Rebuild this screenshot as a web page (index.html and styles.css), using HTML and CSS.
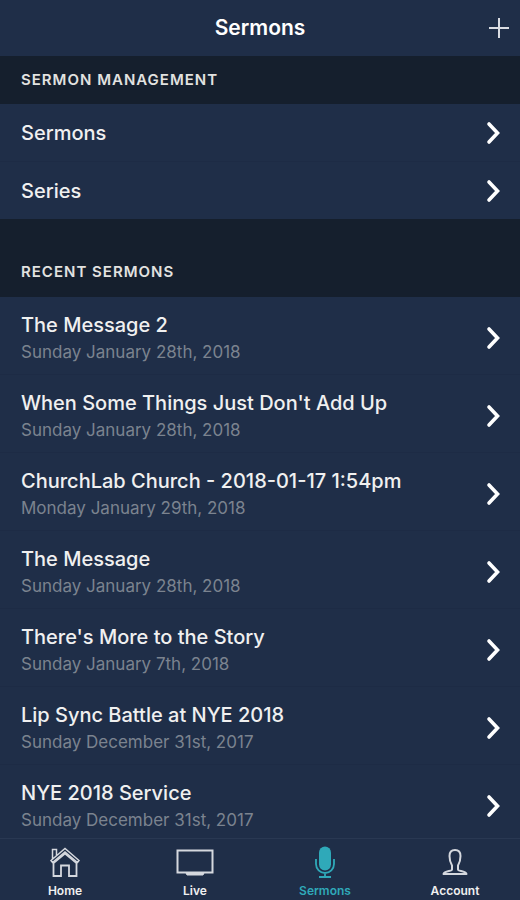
FILE: index.html
```html
<!DOCTYPE html>
<html lang="en">
<head>
<meta charset="utf-8">
<meta name="viewport" content="width=device-width, initial-scale=1">
<title>Sermons</title>
<link rel="stylesheet" href="styles.css">
</head>
<body>
<svg class="symbols" aria-hidden="true">
  <symbol id="chevron" viewBox="0 0 16 24"><path d="M3 3l8.500 9L3 21" fill="none" stroke="currentColor" stroke-width="3.600" stroke-linecap="round" stroke-linejoin="miter"/></symbol>
</svg>
<header class="topbar">
  <h1 class="topbar-title">Sermons</h1>
  <button class="add" type="button" aria-label="Add sermon">
    <svg width="22" height="22" viewBox="0 0 22 22" aria-hidden="true"><path d="M11 1v20M1 11h20" stroke="currentColor" stroke-width="2" fill="none"/></svg>
  </button>
</header>
<main class="content">
  <h2 class="section">Sermon Management</h2>
  <ul class="list">
    <li><a class="row" href="#sermons"><span class="name">Sermons</span><svg class="chevron"><use href="#chevron"/></svg></a></li>
    <li><a class="row" href="#series"><span class="name">Series</span><svg class="chevron"><use href="#chevron"/></svg></a></li>
  </ul>
  <h2 class="section section-spaced">Recent Sermons</h2>
  <ul class="list">
    <li><a class="row row-tall" href="#s1"><span class="text"><span class="name">The Message 2</span><span class="date">Sunday January 28th, 2018</span></span><svg class="chevron"><use href="#chevron"/></svg></a></li>
    <li><a class="row row-tall" href="#s2"><span class="text"><span class="name">When Some Things Just Don't Add Up</span><span class="date">Sunday January 28th, 2018</span></span><svg class="chevron"><use href="#chevron"/></svg></a></li>
    <li><a class="row row-tall" href="#s3"><span class="text"><span class="name">ChurchLab Church - 2018-01-17 1:54pm</span><span class="date">Monday January 29th, 2018</span></span><svg class="chevron"><use href="#chevron"/></svg></a></li>
    <li><a class="row row-tall" href="#s4"><span class="text"><span class="name">The Message</span><span class="date">Sunday January 28th, 2018</span></span><svg class="chevron"><use href="#chevron"/></svg></a></li>
    <li><a class="row row-tall" href="#s5"><span class="text"><span class="name">There's More to the Story</span><span class="date">Sunday January 7th, 2018</span></span><svg class="chevron"><use href="#chevron"/></svg></a></li>
    <li><a class="row row-tall" href="#s6"><span class="text"><span class="name">Lip Sync Battle at NYE 2018</span><span class="date">Sunday December 31st, 2017</span></span><svg class="chevron"><use href="#chevron"/></svg></a></li>
    <li><a class="row row-tall" href="#s7"><span class="text"><span class="name">NYE 2018 Service</span><span class="date">Sunday December 31st, 2017</span></span><svg class="chevron"><use href="#chevron"/></svg></a></li>
  </ul>
</main>
<nav class="tabs">
  <a class="tab" href="#home">
    <svg width="40" height="34" viewBox="0 0 40 34" fill="none" stroke="currentColor" aria-hidden="true"><path d="M8.500 31V18L20 8.500 31.500 18v13H24V20.500h-8V31z" stroke-width="1.800"/><path d="M6 15.500L20 3.500l14 12-1.500 2L20 7 7.500 17.500zM7.500 14V4.500h4v6" stroke-width="1.500"/></svg>
    <span>Home</span>
  </a>
  <a class="tab" href="#live">
    <svg width="40" height="34" viewBox="0 0 40 34" fill="none" stroke="currentColor" aria-hidden="true"><rect x="2.500" y="5.500" width="35" height="22" stroke-width="2"/><path d="M11 28h18l-1 2H12z" fill="currentColor" stroke-width="1"/></svg>
    <span>Live</span>
  </a>
  <a class="tab tab-active" href="#sermons" aria-current="page">
    <svg width="40" height="34" viewBox="0 0 40 34" fill="none" stroke="currentColor" aria-hidden="true"><rect x="14" y="1.500" width="12" height="24" rx="6" fill="currentColor" stroke="none"/><path d="M11 14v5a9 9 0 0 0 18 0v-5M20 28v4M14 32h12" stroke-width="1.800"/></svg>
    <span>Sermons</span>
  </a>
  <a class="tab" href="#account">
    <svg width="40" height="34" viewBox="0 0 40 34" fill="none" stroke="currentColor" aria-hidden="true"><path d="M20 5c-4 0-5.500 2.500-5.500 6 0 4 1 7 2.500 9.500v4c0 2-7.500 1-8.500 4.500h23c-1-3.500-8.500-2.500-8.500-4.500v-4c1.500-2.500 2.500-5.500 2.500-9.500 0-3.500-1.500-6-5.500-6z" stroke-width="2" stroke-linejoin="round"/></svg>
    <span>Account</span>
  </a>
</nav>
</body>
</html>
```
FILE: styles.css
```css
* {
  box-sizing: border-box;
}

body {
  margin: 0;
  height: 100vh;
  display: flex;
  flex-direction: column;
  background: #1f2e48;
  color: #f0f0f0;
  font-family: Inter, "Liberation Sans", sans-serif;
}

a {
  color: inherit;
  text-decoration: none;
}

.symbols {
  display: none;
}

.topbar {
  flex: none;
  display: grid;
  grid-template-columns: 1fr auto 1fr;
  align-items: center;
  height: 56px;
  padding: 0 10px;
}

.topbar-title {
  grid-column: 2;
  margin: 0;
  font-size: 21px;
  font-weight: 600;
  line-height: 28px;
  color: #fff;
}

.add {
  justify-self: end;
  display: flex;
  padding: 0;
  border: 0;
  background: none;
  color: #d9dce2;
}

.content {
  flex: 1;
  min-height: 0;
  overflow-y: auto;
  scrollbar-width: none;
}

.section {
  margin: 0;
  padding: 14px 21px;
  background: #151f2d;
  color: #e2e2e0;
  font-size: 15px;
  font-weight: 600;
  line-height: 20px;
  letter-spacing: 1px;
  text-transform: uppercase;
}

.section-spaced {
  padding-top: 43px;
  padding-bottom: 15px;
}

.list {
  margin: 0;
  padding: 0;
  list-style: none;
}

.list li + li {
  border-top: 1px solid #1d2b45;
}

.row {
  display: flex;
  align-items: center;
  justify-content: space-between;
  padding: 15px 18px 14px 21px;
}

.row-tall {
  padding-top: 14px;
  padding-bottom: 9px;
}

.text {
  display: flex;
  flex-direction: column;
}

.name {
  font-size: 20px;
  font-weight: 500;
  line-height: 28px;
}

.date {
  font-size: 17px;
  line-height: 26px;
  color: #7b838f;
}

.chevron {
  flex: none;
  width: 16px;
  height: 24px;
  color: #fff;
}

.tabs {
  flex: none;
  display: flex;
  border-top: 1px solid #293852;
  padding-top: 6px;
  height: 62px;
}

.tab {
  flex: 1;
  display: flex;
  flex-direction: column;
  align-items: center;
  font-size: 12px;
  font-weight: 600;
  line-height: 16px;
}

.tab svg {
  color: #d5d8de;
  margin-bottom: 4px;
}

.tab-active,
.tab-active svg {
  color: #2fa9b9;
}
```
